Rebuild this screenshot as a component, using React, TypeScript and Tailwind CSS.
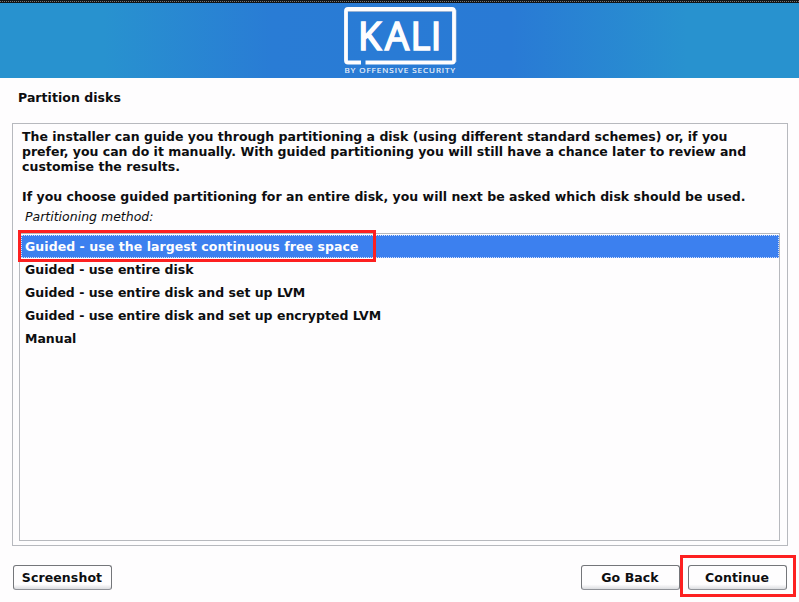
import React from 'react';

const methods = [
  'Guided - use the largest continuous free space',
  'Guided - use entire disk',
  'Guided - use entire disk and set up LVM',
  'Guided - use entire disk and set up encrypted LVM',
  'Manual',
];

function KaliLogo() {
  return (
    <svg width="120" height="74" viewBox="340 3 120 74" role="img" aria-label="Kali by Offensive Security">
      <path d="M348 11.500H452M456 10V62" fill="none" stroke="#b8c2d2" strokeWidth="0.8" />
      <path
        d="M361 62.500H348Q346 62.500 346 60.500V11Q346 9 348 9H452Q454 9 454 11V60.500Q454 62.500 452 62.500H365.500"
        fill="none"
        stroke="#fefdfe"
        strokeWidth="3.8"
      />
      <g fontFamily="'Open Sans', 'Noto Sans', sans-serif" fontWeight="400">
        <text x="358 385 410.500 430.800" y="49.500" fontSize="38" fill="#fefdfe" stroke="#fefdfe" strokeWidth="1.700">KALI</text>
        <text x="344.500" y="73" fontSize="8" fill="#eef2fa" stroke="#eef2fa" strokeWidth="0.200" textLength="110.500">BY OFFENSIVE SECURITY</text>
      </g>
    </svg>
  );
}

function Button({ children }: { children: React.ReactNode }) {
  return (
    <button className="h-[25px] w-[99px] rounded-[3px] border border-[#74767a] border-b-[#909298] bg-linear-to-b from-[#fefdfe] from-80% to-[#dcdde0] pr-[3px] pl-[2px] text-center leading-[21px] tracking-[0.1px]">
      {children}
    </button>
  );
}

export default function App() {
  return (
    <div className="relative flex h-[602px] w-[799px] flex-col overflow-hidden bg-[#fefdfe] font-['DejaVu_Sans',sans-serif] text-[12.5px] leading-[15px] font-bold text-[#0d0e10]">
      <div className="h-[3px] shrink-0 bg-[#121416]">
        <div className="h-full bg-[repeating-linear-gradient(90deg,#777_0px_1px,transparent_1px_2px)] bg-[length:100%_1px] bg-[position:0_1px] bg-no-repeat" />
      </div>
      <header className="flex h-[75px] shrink-0 justify-center bg-[linear-gradient(90deg,#2892cf_0%,#2892cf_13%,#297cd5_34%,#297ad5_64%,#2892cf_86%,#2892cf_100%)] pl-px">
        <KaliLogo />
      </header>
      <h1 className="ml-[18px] pt-[12px] tracking-[0.05px]">Partition disks</h1>
      <main className="mt-[18px] mr-[11px] ml-[12px] flex h-[423px] shrink-0 flex-col border border-[#b7b9be] px-[6px] pt-[5px] pb-[4px]">
        <div className="ml-[3px] whitespace-nowrap">
          <p>
            The installer can guide you through partitioning a disk (using different standard schemes) or, if you
            <br />
            <span className="tracking-[-0.015px]">
              prefer, you can do it manually. With guided partitioning you will still have a chance later to review and
            </span>
            <br />
            <span className="tracking-[0.05px]">customise the results.</span>
          </p>
          <p className="mt-[15px] tracking-[0.01px]">
            If you choose guided partitioning for an entire disk, you will next be asked which disk should be used.
          </p>
        </div>
        <p className="mt-[5px] ml-[6px] font-normal italic">Partitioning method:</p>
        <ul className="mt-[9px] mr-px flex-1 border border-[#b7b9be] pl-px pt-px">
          {methods.map((method, i) => (
            <li
              key={method}
              className={
                i === 0
                  ? 'h-[23px] border border-dotted border-[#d3e0fa] bg-[#3c80ef] pl-[3px] leading-[21px] tracking-[0.065px] text-[#fefdfe]'
                  : 'h-[23px] pl-[4px] leading-[23px]'
              }
            >
              {method}
            </li>
          ))}
        </ul>
      </main>
      <footer className="mt-[19px] mr-[12px] ml-[13px] flex h-[25px] shrink-0">
        <Button>Screenshot</Button>
        <div className="ml-auto flex gap-[8px]">
          <Button>Go Back</Button>
          <Button>Continue</Button>
        </div>
      </footer>
      <div className="absolute top-[230px] left-[18px] h-[32px] w-[358px] border-[3px] border-[#fd2020]" />
      <div className="absolute top-[555px] left-[680px] h-[42px] w-[116px] border-[3px] border-[#fd2020]" />
    </div>
  );
}
